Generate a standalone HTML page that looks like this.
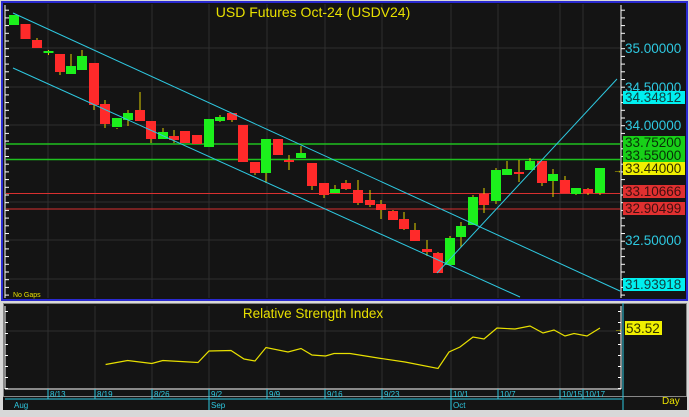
<!DOCTYPE html>
<html><head><style>
body{margin:0;background:#d8d8d8;width:689px;height:412px;overflow:hidden;font-family:"Liberation Sans",sans-serif}
</style></head><body>
<svg width="689" height="412" xmlns="http://www.w3.org/2000/svg" font-family="Liberation Sans, sans-serif">
<defs>
<pattern id="tk" x="0" y="2" width="4" height="7.7" patternUnits="userSpaceOnUse"><rect x="0" y="0" width="4" height="1" fill="#fff"/></pattern>
<pattern id="tk2" x="0" y="3" width="4" height="11" patternUnits="userSpaceOnUse"><rect x="0" y="0" width="4" height="1" fill="#fff"/></pattern>
</defs>
<rect x="0" y="0" width="689" height="412" fill="#d8d8d8"/>
<rect x="2" y="2" width="685" height="298" fill="#141414" stroke="#2a2ad0" stroke-width="2"/>
<rect x="3" y="303" width="684" height="107" fill="#141414"/>
<rect x="3.5" y="303.5" width="683" height="93" fill="none" stroke="#888" stroke-width="1"/>
<g stroke="#2e2e2e" stroke-width="1">
<line x1="48" y1="4" x2="48" y2="298"/><line x1="95" y1="4" x2="95" y2="298"/><line x1="152" y1="4" x2="152" y2="298"/><line x1="209" y1="4" x2="209" y2="298"/><line x1="267" y1="4" x2="267" y2="298"/><line x1="325" y1="4" x2="325" y2="298"/><line x1="382" y1="4" x2="382" y2="298"/><line x1="451" y1="4" x2="451" y2="298"/><line x1="498" y1="4" x2="498" y2="298"/><line x1="560" y1="4" x2="560" y2="298"/><line x1="583" y1="4" x2="583" y2="298"/>
<line x1="6" y1="48" x2="620" y2="48"/><line x1="6" y1="87" x2="620" y2="87"/><line x1="6" y1="125" x2="620" y2="125"/><line x1="6" y1="202" x2="620" y2="202"/><line x1="6" y1="240" x2="620" y2="240"/><line x1="6" y1="279" x2="620" y2="279"/>
<line x1="48" y1="306" x2="48" y2="389"/><line x1="95" y1="306" x2="95" y2="389"/><line x1="152" y1="306" x2="152" y2="389"/><line x1="209" y1="306" x2="209" y2="389"/><line x1="267" y1="306" x2="267" y2="389"/><line x1="325" y1="306" x2="325" y2="389"/><line x1="382" y1="306" x2="382" y2="389"/><line x1="451" y1="306" x2="451" y2="389"/><line x1="498" y1="306" x2="498" y2="389"/><line x1="560" y1="306" x2="560" y2="389"/><line x1="583" y1="306" x2="583" y2="389"/>
<line x1="6" y1="331" x2="620" y2="331"/>
</g>
<line x1="6" y1="144" x2="620" y2="144" stroke="#1fc01f" stroke-width="1.5"/>
<line x1="6" y1="159.5" x2="620" y2="159.5" stroke="#1fc01f" stroke-width="1.5"/>
<line x1="6" y1="193.5" x2="620" y2="193.5" stroke="#d83030" stroke-width="1"/>
<line x1="6" y1="209" x2="620" y2="209" stroke="#d83030" stroke-width="1"/>
<g>
<g stroke="#e0d000" stroke-width="1">
<line x1="37" y1="38" x2="37" y2="48"/><line x1="48.5" y1="50" x2="48.5" y2="55"/><line x1="60" y1="54" x2="60" y2="75"/><line x1="71" y1="54" x2="71" y2="74"/><line x1="82" y1="50" x2="82" y2="70"/><line x1="94" y1="63" x2="94" y2="110"/><line x1="105" y1="100" x2="105" y2="128"/><line x1="117" y1="128" x2="117" y2="129"/><line x1="128" y1="110" x2="128" y2="126"/><line x1="140" y1="92" x2="140" y2="121"/><line x1="151" y1="121" x2="151" y2="143"/><line x1="163" y1="128" x2="163" y2="139"/><line x1="174" y1="130" x2="174" y2="143"/><line x1="220" y1="115" x2="220" y2="122"/><line x1="232" y1="113" x2="232" y2="122"/><line x1="255" y1="162" x2="255" y2="175"/><line x1="266" y1="139" x2="266" y2="183"/><line x1="289" y1="155" x2="289" y2="170"/><line x1="301" y1="146" x2="301" y2="158"/><line x1="312" y1="163" x2="312" y2="190"/><line x1="324" y1="183" x2="324" y2="198"/><line x1="335" y1="185" x2="335" y2="193"/><line x1="346" y1="180" x2="346" y2="190"/><line x1="358" y1="180" x2="358" y2="205"/><line x1="370" y1="190" x2="370" y2="207"/><line x1="381" y1="200" x2="381" y2="219"/><line x1="393" y1="210" x2="393" y2="220"/><line x1="404" y1="212" x2="404" y2="230"/><line x1="415" y1="223" x2="415" y2="241"/><line x1="427" y1="240" x2="427" y2="256"/><line x1="438" y1="252" x2="438" y2="273"/><line x1="450" y1="236" x2="450" y2="265"/><line x1="461" y1="222" x2="461" y2="247"/><line x1="473" y1="195" x2="473" y2="225"/><line x1="484" y1="188" x2="484" y2="213"/><line x1="496" y1="168" x2="496" y2="204"/><line x1="507" y1="161" x2="507" y2="175"/><line x1="519" y1="160" x2="519" y2="182"/><line x1="530" y1="158" x2="530" y2="170"/><line x1="542" y1="161" x2="542" y2="186"/><line x1="553" y1="169" x2="553" y2="197"/><line x1="565" y1="176" x2="565" y2="193"/><line x1="576" y1="188" x2="576" y2="195"/><line x1="588" y1="188" x2="588" y2="195"/><line x1="600" y1="168" x2="600" y2="195"/>
</g>
<g fill="#ff2a2a">
<rect x="20.5" y="24" width="10" height="15"/><rect x="32" y="40" width="10" height="8"/><rect x="55" y="54" width="10" height="18"/><rect x="89" y="63" width="10" height="42"/><rect x="100" y="104" width="10" height="20"/><rect x="135" y="110" width="10" height="11"/><rect x="146" y="121" width="10" height="18"/><rect x="169" y="136" width="10" height="4"/><rect x="180" y="131" width="10" height="12"/><rect x="192" y="135" width="10" height="9"/><rect x="227" y="113" width="10" height="7"/><rect x="238" y="125" width="10" height="37"/><rect x="250" y="162" width="10" height="11"/><rect x="273" y="139" width="10" height="16"/><rect x="284" y="160" width="10" height="2"/><rect x="307" y="163" width="10" height="23"/><rect x="319" y="183" width="10" height="12"/><rect x="341" y="183" width="10" height="6"/><rect x="353" y="190" width="10" height="13"/><rect x="365" y="200" width="10" height="5"/><rect x="376" y="204" width="10" height="6"/><rect x="388" y="211" width="10" height="9"/><rect x="399" y="219" width="10" height="10"/><rect x="410" y="230" width="10" height="11"/><rect x="422" y="249" width="10" height="3"/><rect x="433" y="253" width="10" height="20"/><rect x="479" y="194" width="10" height="11"/><rect x="514" y="172" width="10" height="2"/><rect x="537" y="161" width="10" height="22"/><rect x="560" y="180" width="10" height="13"/><rect x="583" y="189" width="10" height="4"/>
</g>
<g fill="#1cf01c">
<rect x="9" y="15" width="10" height="10"/><rect x="43.5" y="51" width="10" height="2"/><rect x="66" y="66" width="10" height="8"/><rect x="77" y="56" width="10" height="14"/><rect x="112" y="118" width="10" height="9"/><rect x="123" y="113" width="10" height="7"/><rect x="158" y="132" width="10" height="7"/><rect x="204" y="119" width="10" height="28"/><rect x="215" y="117" width="10" height="4"/><rect x="261" y="139" width="10" height="34"/><rect x="296" y="153" width="10" height="5"/><rect x="330" y="189" width="10" height="4"/><rect x="445" y="238" width="10" height="27"/><rect x="456" y="226" width="10" height="11"/><rect x="468" y="197" width="10" height="28"/><rect x="491" y="170" width="10" height="31"/><rect x="502" y="169" width="10" height="6"/><rect x="525" y="161" width="10" height="9"/><rect x="548" y="174" width="10" height="7"/><rect x="571" y="188" width="10" height="6"/><rect x="595" y="168" width="10" height="25"/>
</g>
</g>
<g stroke="#2ec8e0" stroke-width="1">
<line x1="13" y1="13" x2="620" y2="291"/>
<line x1="13" y1="68" x2="520" y2="297"/>
<line x1="437" y1="273" x2="617" y2="79"/>
</g>
<text x="313" y="17" fill="#e8e000" font-size="14" text-anchor="middle">USD  Futures  Oct-24  (USDV24)</text>
<text x="13" y="297" fill="#e8e000" font-size="7">No Gaps</text>
<line x1="621" y1="5" x2="621" y2="298" stroke="#fff" stroke-width="1"/>
<rect x="621" y="5" width="4" height="293" fill="url(#tk)"/>
<line x1="5" y1="5" x2="5" y2="298" stroke="#fff" stroke-width="1"/>
<rect x="5" y="5" width="4" height="293" fill="url(#tk)"/>
<g fill="#2ec8e0" font-size="13.5">
<text x="625" y="53">35.00000</text>
<text x="625" y="92">34.50000</text>
<text x="625" y="130">34.00000</text>
<text x="625" y="245">32.50000</text>
</g>
<rect x="623" y="91" width="62" height="13" fill="#00f0f0"/><text x="625" y="102" font-size="13.5" fill="#104040">34.34812</text>
<rect x="623" y="136" width="62" height="13" fill="#18d018"/><text x="625" y="147" font-size="13.5" fill="#083008">33.75200</text>
<rect x="623" y="149" width="62" height="13" fill="#18d018"/><text x="625" y="160" font-size="13.5" fill="#083008">33.55000</text>
<rect x="623" y="162" width="62" height="13" fill="#f0f000"/><text x="625" y="173" font-size="13.5" fill="#303000">33.44000</text>
<rect x="623" y="185" width="62" height="13" fill="#e03030"/><text x="625" y="196" font-size="13.5" fill="#401010">33.10666</text>
<rect x="623" y="202" width="62" height="13" fill="#e03030"/><text x="625" y="213" font-size="13.5" fill="#401010">32.90499</text>
<rect x="623" y="278" width="62" height="13" fill="#00f0f0"/><text x="625" y="289" font-size="13.5" fill="#104040">31.93918</text>
<text x="613" y="173" fill="#e8e000" font-size="9">→</text>
<line x1="5" y1="306" x2="5" y2="389" stroke="#fff"/>
<rect x="5" y="306" width="3" height="83" fill="url(#tk2)"/>
<line x1="621" y1="306" x2="621" y2="389" stroke="#fff"/>
<rect x="618" y="306" width="3" height="83" fill="url(#tk2)"/>
<line x1="5" y1="389" x2="621" y2="389" stroke="#fff"/>
<text x="313" y="318" fill="#e8e000" font-size="13.5" text-anchor="middle">Relative  Strength  Index</text>
<polyline fill="none" stroke="#e8e000" stroke-width="1.2" points="105.6,364.5 127.6,360.5 151.8,363.5 162.8,360.5 198,362.5 209,351 231,350.5 244,359 255,361 266,347.5 288,352 301,348.5 312,355 325.6,356 334,353.5 350,353.5 378,358 405,362 438,368.5 449,352 460,347 473,337 484,339 497,328 515,329 530,326 543,333 554,330 565,336 574,333.5 587,336 600,328"/>
<rect x="625" y="321" width="37" height="14" fill="#f0f000"/><text x="626" y="333" font-size="13.5" fill="#303000">53.52</text>
<text x="614" y="332" fill="#e8e000" font-size="9">→</text>
<line x1="5" y1="399" x2="622" y2="399" stroke="#2ec8e0"/>
<line x1="623" y1="303" x2="623" y2="410" stroke="#2ec8e0"/>
<g stroke="#2ec8e0"><line x1="48" y1="389" x2="48" y2="399"/><line x1="95" y1="389" x2="95" y2="399"/><line x1="152" y1="389" x2="152" y2="399"/><line x1="209" y1="389" x2="209" y2="410"/><line x1="267" y1="389" x2="267" y2="399"/><line x1="325" y1="389" x2="325" y2="399"/><line x1="382" y1="389" x2="382" y2="399"/><line x1="451" y1="389" x2="451" y2="410"/><line x1="498" y1="389" x2="498" y2="399"/><line x1="560" y1="389" x2="560" y2="399"/><line x1="583" y1="389" x2="583" y2="399"/></g>
<g fill="#2ec8e0" font-size="8">
<text x="50" y="397">8/13</text><text x="97" y="397">8/19</text><text x="154" y="397">8/26</text><text x="211" y="397">9/2</text><text x="269" y="397">9/9</text><text x="327" y="397">9/16</text><text x="384" y="397">9/23</text><text x="453" y="397">10/1</text><text x="500" y="397">10/7</text><text x="562" y="397">10/15</text><text x="585" y="397">10/17</text>
<text x="14" y="408">Aug</text><text x="211" y="408">Sep</text><text x="453" y="408">Oct</text>
</g>
<text x="662" y="404" fill="#e8e000" font-size="10">Day</text>
</svg>
</body></html>
